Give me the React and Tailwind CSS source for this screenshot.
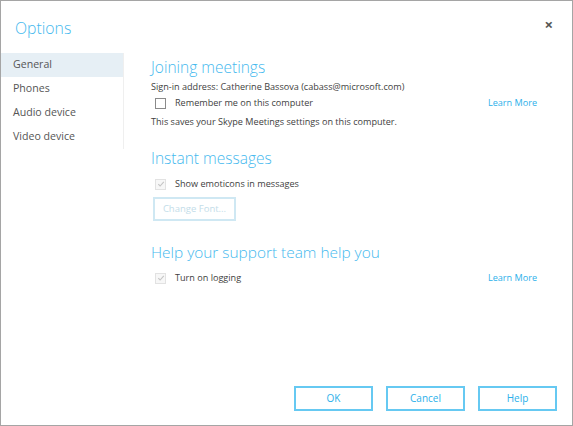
// App.jsx
const BLUE = 'text-[#2cb0ea]';
const HEAD = 'text-[#45b9ee]';

function Check({ checked, disabled }) {
  return (
    <span
      className={`flex items-center justify-center w-[11px] h-[11px] border ${
        disabled ? 'border-[#e2e2e2] bg-[#f7f7f7]' : 'border-[#8a8a8a] bg-white'
      }`}
    >
      {checked && (
        <svg width="8" height="8" viewBox="0 0 8 8">
          <path d="M1.3 4.2 L3.1 6 L6.8 1.8" fill="none" stroke="#c4c4c4" strokeWidth="1.1" />
        </svg>
      )}
    </span>
  );
}

function Row({ checked, disabled, label, learn }) {
  return (
    <div className="flex items-center h-[14px] pl-[4px] pr-[35px]">
      <Check checked={checked} disabled={disabled} />
      <span className="ml-[9px] text-[9.1px] text-[#3e3e3e]">{label}</span>
      {learn && <span className={`ml-auto text-[9.1px] ${BLUE}`}>Learn More</span>}
    </div>
  );
}

export default function App() {
  const nav = ['General', 'Phones', 'Audio device', 'Video device'];
  return (
    <div
      className="w-[573px] h-[426px] bg-white border border-[#a5a5a5] flex flex-col box-border"
      style={{ fontFamily: '"Open Sans", "Noto Sans", sans-serif' }}
    >
      {/* header */}
      <div className="flex items-start h-[52px] pl-[14px] pr-[19px] pt-[16px]">
        <h1 className={`text-[15.8px] leading-[22px] font-light ${HEAD}`}>Options</h1>
        <span className="ml-auto text-[15px] leading-[14px] font-bold text-[#555]">×</span>
      </div>

      <div className="flex flex-1">
        {/* sidebar */}
        <div className="w-[123px] self-start border-r border-[#efefef]">
          {nav.map((n, i) => (
            <div
              key={n}
              className={`h-6 flex items-center pl-[12px] text-[10.6px] text-[#555] ${i === 0 ? 'bg-[#e6eff5]' : ''}`}
            >
              {n}
            </div>
          ))}
        </div>

        {/* content */}
        <div className="flex-1 flex flex-col pl-[27px]">
          <h2 className={`mt-[3px] text-[15.5px] leading-[22px] font-light ${HEAD}`}>Joining meetings</h2>
          <p className="mt-[2px] h-[14px] leading-[14px] text-[9.1px] text-[#3e3e3e]">
            Sign-in address: Catherine Bassova (cabass@microsoft.com)
          </p>
          <div className="mt-[2px]">
            <Row label="Remember me on this computer" learn />
          </div>
          <p className="mt-[5px] h-[14px] leading-[14px] text-[9.1px] text-[#3e3e3e]">
            This saves your Skype Meetings settings on this computer.
          </p>

          <h2 className={`mt-[18px] text-[15.5px] leading-[22px] font-light ${HEAD}`}>Instant messages</h2>
          <div className="mt-[8px]">
            <Row checked disabled label="Show emoticons in messages" />
          </div>
          <button className="mt-[6px] ml-[2px] w-[83px] h-[24px] border-2 border-[#cfe8f3] text-[9.5px] text-[#c3dde9]">
            Change Font...
          </button>

          <h2 className={`mt-[21px] text-[15.4px] leading-[22px] font-light ${HEAD}`}>Help your support team help you</h2>
          <div className="mt-[7px]">
            <Row checked disabled label="Turn on logging" learn />
          </div>
        </div>
      </div>

      {/* footer */}
      <div className="flex justify-end gap-[13px] pr-[15px] pb-[14px]">
        {['OK', 'Cancel', 'Help'].map((b) => (
          <button
            key={b}
            className={`w-[79px] h-[25px] border-2 border-[#66c9f2] text-[10px] ${BLUE}`}
          >
            {b}
          </button>
        ))}
      </div>
    </div>
  );
}
